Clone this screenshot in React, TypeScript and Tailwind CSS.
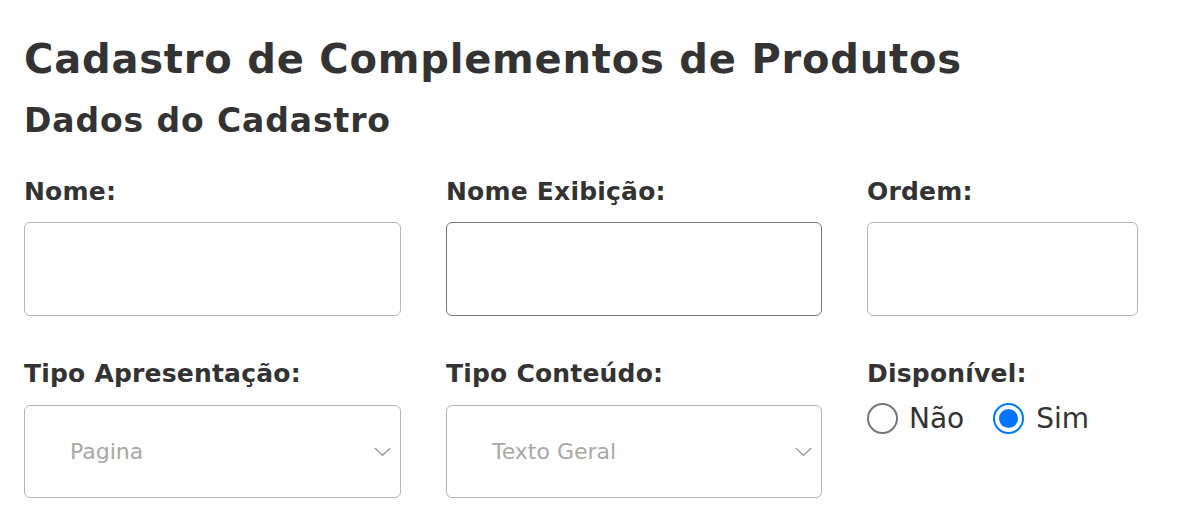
import React from "react";

const Chevron = () => (
  <svg width="17" height="10" viewBox="0 0 17 10" fill="none" className="absolute right-[9px] top-1/2 -translate-y-1/2">
    <path d="M1.2 1.5 L8.5 8.3 L15.8 1.5" stroke="#9c9c9c" strokeWidth="1.5" strokeLinecap="round" strokeLinejoin="round" />
  </svg>
);

const Label = ({ children }: { children: React.ReactNode }) => (
  <label className="block text-[25px] font-bold leading-[32px] tracking-[0.2px]">{children}</label>
);

const Select = ({ value }: { value: string }) => (
  <div className="relative mt-[15px] flex h-[93px] items-center rounded-[6px] border border-[#b5b5b5] bg-white pl-[45px]">
    <span className="text-[22px] leading-[28px] text-[#a8a8a8]">{value}</span>
    <Chevron />
  </div>
);

export default function App() {
  return (
    <div
      className="min-h-[527px] w-[1202px] bg-white pl-[24px] pt-[35px] text-[#333333]"
      style={{ fontFamily: "'DejaVu Sans', 'Noto Sans', sans-serif" }}
    >
      <h1 className="m-0 text-[40px] font-bold leading-[48px] tracking-[0.8px]">Cadastro de Complementos de Produtos</h1>
      <h2 className="m-0 mt-[18px] text-[33px] font-bold leading-[40px] tracking-[0.9px]">Dados do Cadastro</h2>
      <div className="mt-[35px] grid grid-cols-[377px_376px_271px] gap-x-[45px]">
        <div>
          <Label>Nome:</Label>
          <div className="mt-[14px] h-[94px] rounded-[6px] border border-[#b5b5b5]" />
        </div>
        <div>
          <Label>Nome Exibição:</Label>
          <div className="mt-[14px] h-[94px] rounded-[6px] border border-[#767676]" />
        </div>
        <div>
          <Label>Ordem:</Label>
          <div className="mt-[14px] h-[94px] rounded-[6px] border border-[#b5b5b5]" />
        </div>
        <div className="mt-[42px]">
          <Label>Tipo Apresentação:</Label>
          <Select value="Pagina" />
        </div>
        <div className="mt-[42px]">
          <Label>Tipo Conteúdo:</Label>
          <Select value="Texto Geral" />
        </div>
        <div className="mt-[42px]">
          <Label>Disponível:</Label>
          <div className="mt-[13px] flex h-[31px] items-center">
            <span className="box-border h-[31px] w-[31px] shrink-0 rounded-full border-2 border-[#767676] bg-white" />
            <span className="ml-[11px] text-[28px] leading-[31px]">Não</span>
            <span className="ml-[29px] box-border flex h-[31px] w-[31px] shrink-0 items-center justify-center rounded-full border-2 border-[#0075ff] bg-white">
              <span className="h-[19px] w-[19px] rounded-full bg-[#0075ff]" />
            </span>
            <span className="ml-[12px] text-[28px] leading-[31px]">Sim</span>
          </div>
        </div>
      </div>
    </div>
  );
}
